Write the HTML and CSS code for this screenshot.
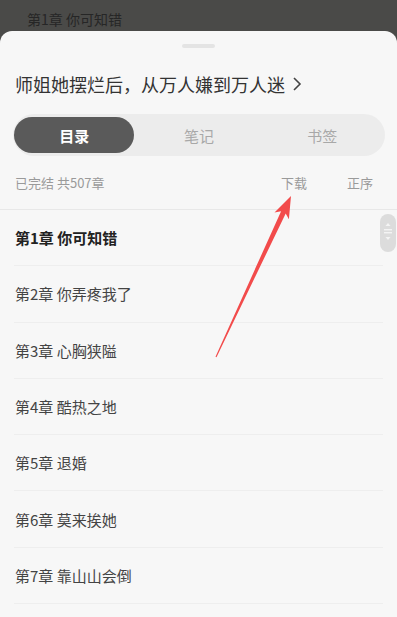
FILE: index.html
```html
<!DOCTYPE html>
<html lang="zh-CN">
<head>
<meta charset="utf-8">
<title>目录</title>
<link rel="stylesheet" href="styles.css">
</head>
<body>
<div class="peek">第1章 你可知错</div>
<div class="sheet">
  <div class="handle"></div>
  <div class="title">师姐她摆烂后，从万人嫌到万人迷<svg class="chev" width="10" height="16" viewBox="0 0 10 16"><path d="M2 2 L8 8 L2 14" fill="none" stroke="#444" stroke-width="1.6"/></svg></div>
  <div class="tabs">
    <div class="tab active">目录</div>
    <div class="tab">笔记</div>
    <div class="tab">书签</div>
  </div>
  <div class="info">
    <span class="status">已完结 共507章</span>
    <span class="actions"><span>下载</span><span>正序</span></span>
  </div>
  <ul class="chapters">
    <li class="current">第1章 你可知错</li>
    <li>第2章 你弄疼我了</li>
    <li>第3章 心胸狭隘</li>
    <li>第4章 酷热之地</li>
    <li>第5章 退婚</li>
    <li>第6章 莫来挨她</li>
    <li>第7章 靠山山会倒</li>
    <li></li>
  </ul>
  <div class="thumb">
    <svg width="16" height="38" viewBox="0 0 16 38"><path d="M8 9 L10.5 12 L5.5 12 Z" fill="#f4f4f4"/><rect x="4" y="15" width="8" height="1.4" fill="#f4f4f4"/><rect x="4" y="18" width="8" height="1.4" fill="#f4f4f4"/><path d="M8 26 L10.5 23 L5.5 23 Z" fill="#f4f4f4"/></svg>
  </div>
</div>
<svg class="arrow" width="397" height="617" viewBox="0 0 397 617">
  <polygon points="215.5,356.8 281.1,211.2 274.5,212.5 291,196 288.9,219.3 285.7,213.4 216.5,357.2" fill="#f24b4b"/>
</svg>
</body>
</html>
```
FILE: styles.css
```css
html, body {
  margin: 0;
  padding: 0;
}
body {
  width: 397px;
  height: 617px;
  overflow: hidden;
  background: #4a4a48;
  font-family: "Noto Sans CJK SC", "Noto Sans", sans-serif;
  position: relative;
}
.peek {
  height: 31px;
  padding-left: 27px;
  line-height: 38px;
  font-size: 14px;
  color: #262626;
  box-sizing: border-box;
}
.sheet {
  height: 586px;
  background: #f7f7f7;
  border-radius: 12px 12px 0 0;
  position: relative;
  overflow: hidden;
}
.handle {
  width: 33px;
  height: 4px;
  border-radius: 2px;
  background: #e4e4e4;
  margin: 13px auto 0;
}
.title {
  margin-top: 23px;
  padding-left: 15px;
  font-size: 18px;
  line-height: 26px;
  color: #333;
  display: flex;
  align-items: center;
}
.chev {
  margin-left: 7px;
}
.tabs {
  margin: 17px 12px 0 13px;
  height: 42px;
  box-sizing: border-box;
  padding: 3px 1px;
  background: #ececec;
  border-radius: 21px;
  display: grid;
  grid-template-columns: 1fr 1fr 1fr;
}
.tab {
  display: flex;
  align-items: center;
  justify-content: center;
  font-size: 15px;
  color: #a8a8a8;
  border-radius: 18px;
}
.tab.active {
  background: #5a5a5a;
  color: #fff;
  font-weight: bold;
  margin-right: 3px;
}
.info {
  height: 53px;
  display: flex;
  align-items: center;
  justify-content: space-between;
  padding: 0 24px 0 15px;
  font-size: 13px;
  color: #9a9a9a;
  border-bottom: 1px solid #e8e8e8;
}
.actions {
  display: flex;
  gap: 40px;
}
.chapters {
  list-style: none;
  margin: 0 14px;
  padding: 0;
}
.chapters li {
  height: 55.3px;
  border-bottom: 1px solid #eeeeee;
  display: flex;
  align-items: center;
  padding-left: 1px;
  font-size: 15px;
  color: #444;
}
.chapters li.current {
  font-weight: bold;
  color: #222;
}
.thumb {
  position: absolute;
  right: 1px;
  top: 183px;
  width: 16px;
  height: 38px;
  border-radius: 8px;
  background: #dcdcdc;
}
.thumb svg {
  display: block;
}
.arrow {
  position: absolute;
  left: 0;
  top: 0;
  pointer-events: none;
}
```
